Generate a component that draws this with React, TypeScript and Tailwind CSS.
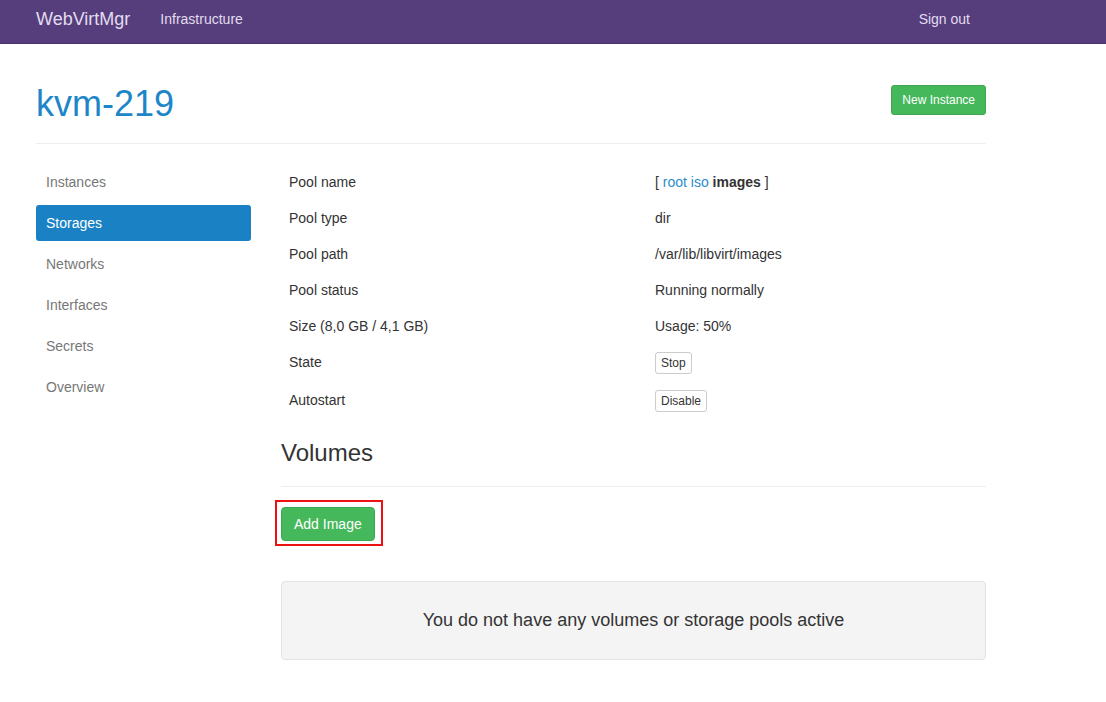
const rows: { label: string; value: React.ReactNode; tall?: boolean }[] = [
  {
    label: "Pool name",
    value: (
      <>
        [ <a className="text-[#2a8bcc]">root</a> <a className="text-[#2a8bcc]">iso</a>{" "}
        <b className="font-bold">images</b> ]
      </>
    ),
  },
  { label: "Pool type", value: "dir" },
  { label: "Pool path", value: "/var/lib/libvirt/images" },
  { label: "Pool status", value: "Running normally" },
  { label: "Size (8,0 GB / 4,1 GB)", value: "Usage: 50%" },
  { label: "State", value: <SmallButton>Stop</SmallButton>, tall: true },
  { label: "Autostart", value: <SmallButton>Disable</SmallButton>, tall: true },
];

const sections = ["Instances", "Storages", "Networks", "Interfaces", "Secrets", "Overview"];

function SmallButton({ children }: { children: React.ReactNode }) {
  return (
    <button className="h-[22px] rounded-[3px] border border-[#cccccc] bg-white px-[5px] text-[12px] leading-[18px] text-[#333]">
      {children}
    </button>
  );
}

export default function App() {
  return (
    <div className="min-h-screen bg-white font-['Liberation_Sans',Arial,sans-serif] text-[14px] text-[#333]">
      <nav className="h-[44px] border-b border-[#4a3270] bg-[#563e7c]">
        <div className="ml-[36px] flex h-full w-[950px] items-center justify-between pb-[4px]">
          <div className="flex items-center">
            <span className="text-[18px] text-[#e2dcef]">WebVirtMgr</span>
            <span className="ml-[30px] text-[#e2dcef]">Infrastructure</span>
          </div>
          <span className="mr-[16px] text-[#e2dcef]">Sign out</span>
        </div>
      </nav>

      <div className="ml-[36px] w-[950px]">
        <div className="mt-[40px] flex items-start justify-between border-b border-[#eeeeee] pb-[19px]">
          <h1 className="text-[36px] leading-[40px] text-[#1e86c8]">kvm-219</h1>
          <button className="mt-[1px] h-[30px] rounded-[3px] border border-[#3ea653] bg-[#45b85c] px-[10px] text-[12px] text-white">
            New Instance
          </button>
        </div>

        <div className="mt-[20px] flex">
          <ul className="flex w-[215px] flex-col gap-[5px]">
            {sections.map((s) => (
              <li
                key={s}
                className={
                  s === "Storages"
                    ? "h-[36px] rounded-[3px] bg-[#1a82c4] px-[10px] leading-[36px] text-white"
                    : "h-[36px] px-[10px] leading-[36px] text-[#777777]"
                }
              >
                {s}
              </li>
            ))}
          </ul>

          <div className="ml-[30px] flex-1">
            <table className="w-full">
              <tbody>
                {rows.map((r) => (
                  <tr key={r.label}>
                    <td className="w-[366px] px-[8px] py-[8px] align-top leading-[20px]">{r.label}</td>
                    <td className={"px-[8px] py-[8px] align-top leading-[20px]" + (r.tall ? " h-[38px]" : "")}>
                      {r.value}
                    </td>
                  </tr>
                ))}
              </tbody>
            </table>

            <div className="mt-[20px] border-b border-[#eeeeee] pb-[20px]">
              <h3 className="text-[24px] leading-[26px]">Volumes</h3>
            </div>

            <div className="mt-[20px]">
              <span className="relative inline-block">
                <button className="h-[34px] rounded-[4px] border border-[#3ea653] bg-[#45b85c] px-[12px] text-[14px] text-white">
                  Add Image
                </button>
                <span className="pointer-events-none absolute -bottom-[5px] -left-[6px] -right-[8px] -top-[7px] border-2 border-[#ee1111]" />
              </span>
            </div>

            <div className="mt-[40px] flex h-[79px] items-center justify-center rounded-[4px] border border-[#e3e3e3] bg-[#f4f4f4] text-[18px] text-[#333]">
              You do not have any volumes or storage pools active
            </div>
          </div>
        </div>
      </div>
    </div>
  );
}
